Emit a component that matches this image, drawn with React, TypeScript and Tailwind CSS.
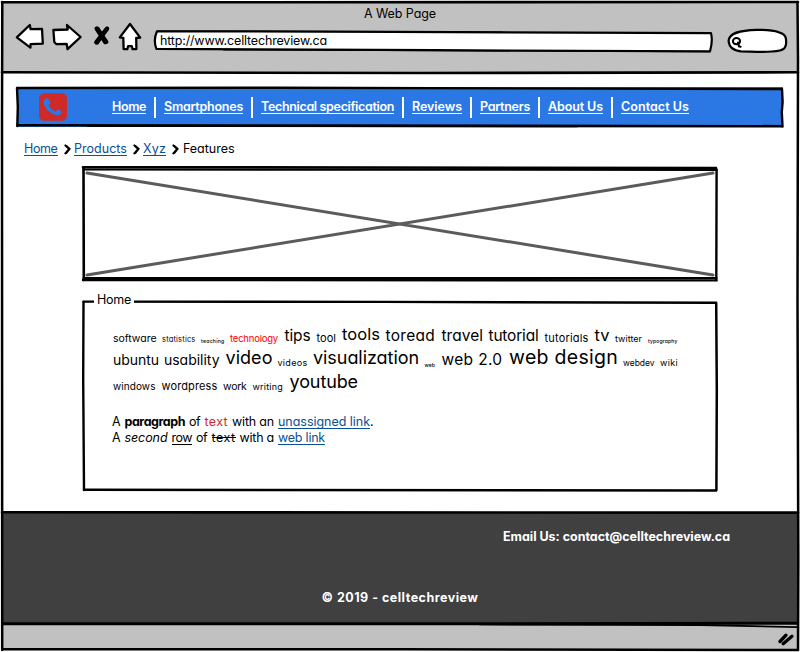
import { useLayoutEffect, useRef } from "react";
import type { ReactNode } from "react";

/* Text spaced out (or in) so that it fills exactly `w` pixels. */
function Fit({ w, children, className = "", ml, mt }: { w: number; children: string; className?: string; ml?: number; mt?: number }) {
  const inner = useRef<HTMLSpanElement>(null);
  useLayoutEffect(() => {
    const el = inner.current;
    if (!el) return;
    el.style.letterSpacing = "0px";
    const natural = el.getBoundingClientRect().width;
    el.style.letterSpacing = `${(w - natural) / children.length}px`;
  }, [w, children]);
  return (
    <span
      className={`block h-[18px] shrink-0 whitespace-nowrap leading-[22px] ${className}`}
      style={{ width: w, marginLeft: ml, marginTop: mt }}
    >
      <span ref={inner} className="inline-block">{children}</span>
    </span>
  );
}

type Stroke = [string, number, string?];

/* Hand-drawn outline laid over a panel. */
function Pen({ strokes }: { strokes: Stroke[] }) {
  return (
    <svg className="pointer-events-none absolute inset-0 h-full w-full overflow-visible" fill="none">
      {strokes.map(([d, width, color], i) => (
        <path key={i} d={d} strokeWidth={width} stroke={color ?? "#000"} strokeLinecap="round" strokeLinejoin="round" />
      ))}
    </svg>
  );
}

const nav: [string, number, number][] = [
  ["Home", 34, 9],
  ["Smartphones", 79, 8],
  ["Technical specification", 133, 8],
  ["Reviews", 50, 8],
  ["Partners", 50, 8],
  ["About Us", 55, 8],
  ["Contact Us", 68, 0],
];

/* text, left edge, width, font size, baseline */
type Tag = [string, number, number, number, number, string?];
const cloud: Tag[][] = [
  [
    ["software", 113, 43.5, 10.5, 20],
    ["statistics", 162, 33.5, 7.5, 20],
    ["teaching", 201, 23.5, 5.2, 21],
    ["technology", 230, 48, 9.5, 20, "text-[#f00]"],
    ["tips", 284.5, 26, 15.5, 19],
    ["tool", 316.5, 19.5, 11, 20],
    ["tools", 342, 38, 16.5, 18],
    ["toread", 385.5, 49.5, 15.5, 19],
    ["travel", 441.5, 41.5, 15.5, 19],
    ["tutorial", 488.5, 50, 15.5, 19],
    ["tutorials", 544.5, 44, 11, 20],
    ["tv", 594.5, 15, 16.5, 19],
    ["twitter", 615, 27, 9, 20],
    ["typography", 648, 29.5, 5.2, 21],
  ],
  [
    ["ubuntu", 113, 46, 14, 19],
    ["usability", 164, 55.5, 14, 19],
    ["video", 225.5, 47, 18, 18],
    ["videos", 277.5, 30, 9, 20],
    ["visualization", 313, 106, 18, 18],
    ["web", 424.5, 10.5, 5.2, 21],
    ["web 2.0", 441.5, 61, 15.5, 19],
    ["web design", 509, 109, 19.5, 18],
    ["webdev", 623, 31.5, 8.5, 20],
    ["wiki", 660, 18, 9, 20],
  ],
  [
    ["windows", 113, 42.5, 10, 20],
    ["wordpress", 161.5, 56, 11, 20],
    ["work", 223, 23.5, 10.5, 20],
    ["writing", 252.5, 30.5, 9, 20],
    ["youtube", 289.5, 68.5, 18, 18],
  ],
];

const lineBaseline = (size: number) => {
  const up = Math.round(size * 0.96875);
  const down = Math.round(size * 0.2412);
  return Math.floor((22 - up - down) / 2) + up;
};

function CloudRow({ tags }: { tags: Tag[] }) {
  return (
    <div className="flex h-[24px] items-start">
      {tags.map(([text, x, w, size, base, color], i) => {
        const prev = i ? tags[i - 1][1] + tags[i - 1][2] : 113;
        return (
          <div key={text} style={{ fontSize: size }} className={`${color ?? "text-black"} ${size < 7 ? "font-medium" : "font-normal"}`}>
            <Fit w={w} ml={x - prev} mt={base - lineBaseline(size)}>{text}</Fit>
          </div>
        );
      })}
    </div>
  );
}

function Chevron() {
  return (
    <svg width="7" height="11" viewBox="0 0 7 11" className="mt-[6px] shrink-0" fill="none">
      <path d="M1.4 1.4 L5.2 5 L1.4 9.4 M2.4 2 L5.6 4.8 L2.4 9" stroke="#000" strokeWidth="2" strokeLinecap="round" />
    </svg>
  );
}

const link = "border-b border-[#0b4f94] text-[#0b4f94]";

function Line({ children }: { children: ReactNode }) {
  return <div className="flex h-[16px] items-start">{children}</div>;
}

export default function App() {
  return (
    <div className="relative flex h-[652px] w-[800px] flex-col overflow-hidden bg-white text-[12.5px] text-black [font-family:Inter,'Open_Sans',sans-serif] [font-feature-settings:'cv11','calt'_0]">
      <header className="mx-[2px] mt-[2px] flex h-[70px] shrink-0 flex-col bg-[#c1c1c1]">
        <div className="flex justify-center pt-px">
          <Fit w={72}>A Web Page</Fit>
        </div>
        <div className="flex items-start">
          <svg width="142" height="34" viewBox="0 18 142 34" className="shrink-0" fill="#fff" stroke="#000" strokeWidth="2.3" strokeLinejoin="round">
            <g transform="translate(-2 -3)">
              <path d="M16.8 37.4 L29.8 25 L30.6 29.2 L42 28.8 L42.8 43.6 L30.6 44.2 L30.4 47.6 Z" />
              <path d="M53.4 30 L67.7 29.5 L67 25 L80.6 37 L67.5 49.2 L66.7 43.8 L56.5 44.2 L54.3 42 Z" />
              <path d="M96.6 28.6 L105.2 42.2 M106.8 28.8 L96.2 42.4" strokeWidth="4.2" strokeLinecap="round" />
              <path d="M97.5 28.4 L106.6 42 M107.4 28.6 L97.2 42.6" strokeWidth="3.8" strokeLinecap="round" />
              <path d="M130 24 L119.8 37.4 L123.3 37.8 L123.6 49 L127.3 49.2 L128.1 46.2 L131.8 46.2 L132.6 49.2 L136.4 49 L136.2 38 L140.2 37.6 Z" />
            </g>
          </svg>
          <div className="relative ml-[9px] mt-[7px] h-[24px] w-[562px] shrink-0">
            <svg className="absolute inset-0 overflow-visible" width="562" height="24" fill="#fff" stroke="#000" strokeLinejoin="round">
              <path d="M4 3.3 L180 3.6 L558 5.2 Q560 13 557 23.4 L280 22.2 L3.4 20.8 Q0 12 4 3.3 Z" strokeWidth="2.2" />
              <path d="M70 21.8 L557 23.6 M4 3 L350 4" strokeWidth="1.2" fill="none" />
            </svg>
            <div className="relative flex pl-[7px] pt-[2px]">
              <Fit w={167}>http://www.celltechreview.ca</Fit>
            </div>
          </div>
          <svg width="62" height="26" viewBox="727 28 62 26" className="ml-[12px] mt-[7px] shrink-0" fill="#fff" stroke="#000">
            <path d="M728.6 41 C729 33 739 30.3 757 29.8 C775 29.8 784.5 32 785.8 38 C787.4 48 785 51 772 51.5 C760 52.4 750 51.3 741 51.3 C732 50.5 729 46 728.6 41 Z" strokeWidth="2.2" />
            <ellipse cx="736.5" cy="41.2" rx="3.6" ry="3.1" strokeWidth="2" />
            <path d="M738 42.5 L739 46.4 L740.6 46.8" strokeWidth="2.1" strokeLinecap="round" fill="none" />
          </svg>
        </div>
      </header>

      <main className="flex h-[441px] shrink-0 flex-col">
        <nav className="relative ml-[17px] mt-[15px] flex h-[40px] w-[766px] shrink-0 items-start bg-[#2b78e4]">
          <Pen
            strokes={[
              ["M0.5 1 L260 0.8 L764.5 2", 2.4],
              ["M0 1 L0.8 20 L0.3 39", 2.4],
              ["M765 2 L765.6 15 L764.8 25 L765.5 39.5", 2.4],
              ["M0.5 38.3 L300 38.6 L765 39.2", 2.6],
              ["M70 39.4 L560 39.8", 1],
            ]}
          />
          <svg width="28" height="28" viewBox="117 41 85 83" className="ml-[22px] mt-[6px] shrink-0">
            <rect x="117" y="41" width="85" height="83" rx="16" fill="#cf2a27" />
            <path d="M137 57 Q143 54 146 58 L151 67 Q153 72 148 75 Q146 77 148 80 Q154 91 165 96 Q168 97 170 93 Q173 89 177 91 L184 94 Q188 98 183 104 Q177 110 168 107 Q142 100 132 74 Q129 62 137 57 Z" fill="#2b78e4" />
          </svg>
          <div className="ml-[45px] flex items-start font-semibold text-white">
            {nav.map(([label, w, gap]) => (
              <div key={label} className="flex items-start">
                <Fit w={w} className="mt-[9px] border-b border-white">{label}</Fit>
                {gap > 0 && <div className="mx-[8px] mt-[10px] h-[21px] w-[2px] bg-white" />}
              </div>
            ))}
          </div>
        </nav>

        <div className="ml-[24px] mt-[11px] flex h-[20px] shrink-0 items-start">
          <Fit w={33.5} className={link}>Home</Fit>
          <div className="ml-[6px] flex w-[10.5px]"><Chevron /></div>
          <Fit w={53} className={link}>Products</Fit>
          <div className="ml-[6px] flex w-[10px]"><Chevron /></div>
          <Fit w={23} className={link}>Xyz</Fit>
          <div className="ml-[6px] flex w-[11px]"><Chevron /></div>
          <Fit w={51.5}>Features</Fit>
        </div>

        <div className="relative ml-[82px] mt-[8px] h-[116px] w-[636px] shrink-0">
          <Pen
            strokes={[
              ["M5 7 L631 109 M5 109 L631 7", 3, "#5b5b5b"],
              ["M1 1.2 L634 2", 2.6],
              ["M1.5 3.5 L634.5 4", 2],
              ["M1.5 2 L1.8 114", 2.6],
              ["M634.6 3.5 L634.3 114", 2.4],
              ["M1.5 112 L634.5 112", 2.2],
              ["M1 114 L634.5 114.4", 2.4],
            ]}
          />
        </div>

        <section className="relative ml-[82px] mt-[8px] flex h-[202px] w-[636px] shrink-0 flex-col">
          <Pen
            strokes={[
              ["M1.5 11.6 L300 11.9 L634 12.8", 2.4],
              ["M1.5 12 L1.2 90 L2 200", 2.4],
              ["M634.2 13 L634.8 100 L634.4 200", 2.5],
              ["M2 199.7 L634 200.5", 2.5],
            ]}
          />
          <div className="relative ml-[12px] mt-px flex h-[20px] w-[40px] bg-white pl-[3px]">
            <Fit w={34} mt={-2}>Home</Fit>
          </div>
          <div className="relative ml-[31px] mt-[11px] flex flex-col">
            {cloud.map((row, i) => (
              <CloudRow key={i} tags={row} />
            ))}
          </div>
          <div className="relative ml-[30px] mt-[17px] flex flex-col">
            <Line>
              <Fit w={8.5}>A</Fit>
              <Fit w={60.5} ml={4} className="font-bold">paragraph</Fit>
              <Fit w={11} ml={4}>of</Fit>
              <Fit w={23.5} ml={4.5} className="text-[#cf2a27]">text</Fit>
              <Fit w={42} ml={4}>with an</Fit>
              <Fit w={92} ml={4} className={link}>unassigned link</Fit>
              <Fit w={3}>.</Fit>
            </Line>
            <Line>
              <Fit w={8.5}>A</Fit>
              <Fit w={43} ml={4} className="italic">second</Fit>
              <Fit w={20.5} ml={4} className="border-b border-black">row</Fit>
              <Fit w={11} ml={4}>of</Fit>
              <div className="relative ml-[4.5px]">
                <Fit w={24}>text</Fit>
                <div className="absolute left-0 top-[10px] h-px w-[24px] bg-black" />
              </div>
              <Fit w={34.5} ml={4}>with a</Fit>
              <Fit w={47} ml={4} className={link}>web link</Fit>
            </Line>
          </div>
        </section>
      </main>

      <footer className="mx-[2px] flex h-[111px] shrink-0 flex-col bg-[#404040] font-bold text-white">
        <div className="mr-[68px] mt-[13px] flex justify-end">
          <Fit w={227}>Email Us: contact@celltechreview.ca</Fit>
        </div>
        <div className="mt-[43px] flex justify-center">
          <Fit w={157}>© 2019 - celltechreview</Fit>
        </div>
      </footer>

      <div className="mx-[2px] flex h-[26px] shrink-0 items-start justify-end bg-[#c1c1c1]">
        <svg width="18" height="14" viewBox="0 0 18 14" className="mr-[3px] mt-[8px]" fill="none" stroke="#000" strokeLinecap="round">
          <path d="M3 9.5 L9 3.2" strokeWidth="3.4" />
          <path d="M6.2 11.8 L15 4.2" strokeWidth="3.2" />
        </svg>
      </div>

      <Pen
        strokes={[
          ["M2 2.3 L798 2", 2.6],
          ["M2.3 2 L2 120 L2.2 650", 2.5],
          ["M797.5 2 L798 60 L797.5 300 L798.3 560 L798 650", 2.5],
          ["M2 72.3 L420 73 L798 72.3", 2.6],
          ["M2 512.3 L798 512.6", 2.6],
          ["M3 623.8 L500 623.8 L797 623.3", 3],
          ["M480 624.4 L700 625 L797 627.2", 1.8],
          ["M3 649.3 L400 649.3 L798 650", 2.4],
        ]}
      />
    </div>
  );
}
